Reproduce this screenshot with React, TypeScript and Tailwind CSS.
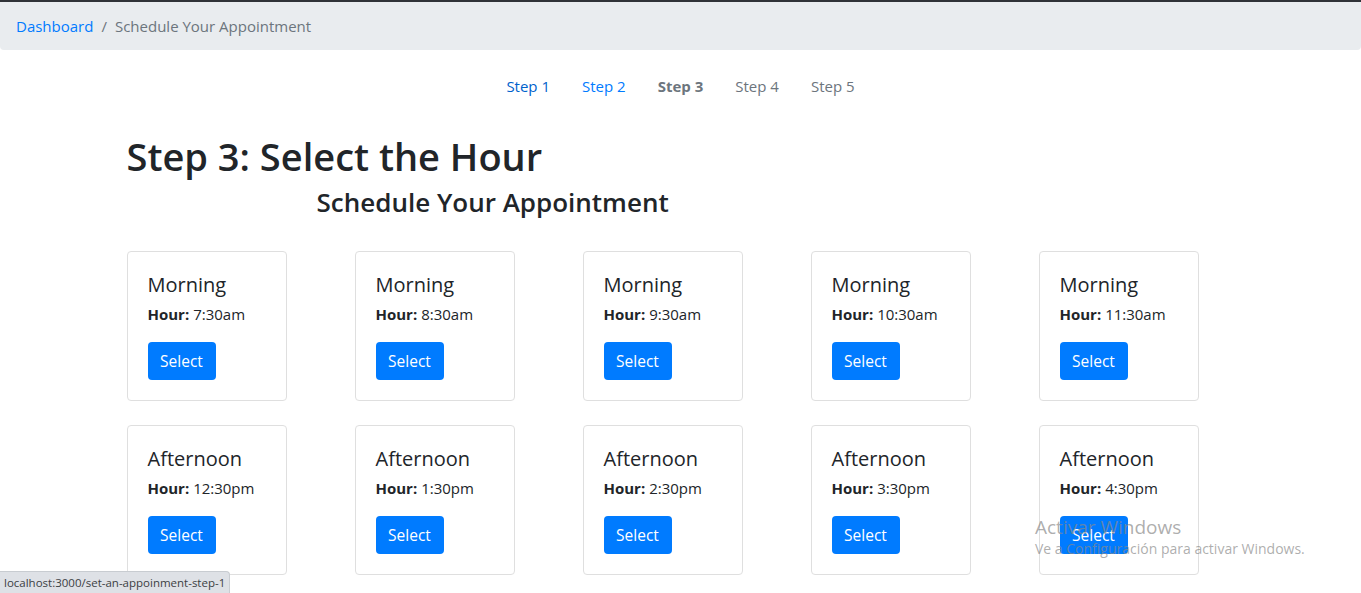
import React from 'react';

const morning = ['7:30am', '8:30am', '9:30am', '10:30am', '11:30am'];
const afternoon = ['12:30pm', '1:30pm', '2:30pm', '3:30pm', '4:30pm'];

const steps = [
  { label: 'Step 1', cls: 'text-[#0062cc]' },
  { label: 'Step 2', cls: 'text-[#007bff]' },
  { label: 'Step 3', cls: 'text-[#6c757d] font-bold' },
  { label: 'Step 4', cls: 'text-[#6c757d]' },
  { label: 'Step 5', cls: 'text-[#6c757d]' },
];

const HourCard = ({ period, hour }: { period: string; hour: string }) => (
  <div className="w-[160px] h-[150px] border border-[#dfdfdf] rounded-[4px] px-5 pt-[21px]">
    <h5 className="text-[20px] leading-[24px] text-[#212529]">{period}</h5>
    <p className="mt-[5px] text-[15px] leading-[24px] text-[#212529]">
      <b className="font-bold">Hour:</b> {hour}
    </p>
    <button className="mt-[16px] w-[68px] h-[38px] rounded-[4px] bg-[#007bff] text-white text-[15.5px] leading-[24px]">
      Select
    </button>
  </div>
);

export default function App() {
  return (
    <div className="relative min-h-[593px] bg-white text-[#212529] font-['Open_Sans',sans-serif] text-[15px] overflow-hidden">
      <div className="h-[2px] bg-[#2f3237]" />
      <nav className="h-[48px] bg-[#e9ecef] rounded-b-[4px] px-4 flex items-center text-[15px] pt-[1px]">
        <a className="text-[#007bff]">Dashboard</a>
        <span className="px-2 text-[#6c757d]">/</span>
        <span className="text-[#6c757d]">Schedule Your Appointment</span>
      </nav>

      <ul className="mt-4 flex justify-center">
        {steps.map((s) => (
          <li key={s.label} className={`px-4 py-2 leading-[24px] ${s.cls}`}>
            {s.label}
          </li>
        ))}
      </ul>

      <div className="w-[1108px] mx-auto">
        <h1 className="mt-[26px] text-[38px] leading-[48px] font-semibold">Step 3: Select the Hour</h1>
        <h3 className="ml-[190px] mt-[5px] text-[26px] leading-[34px] font-semibold">Schedule Your Appointment</h3>

        <div className="mt-[32px] grid grid-cols-[repeat(5,160px)] gap-x-[68px] gap-y-[24px]">
          {morning.map((h) => (
            <HourCard key={h} period="Morning" hour={h} />
          ))}
          {afternoon.map((h) => (
            <HourCard key={h} period="Afternoon" hour={h} />
          ))}
        </div>
      </div>

      {/* browser status bar */}
      <div className="absolute left-0 bottom-0 h-[22px] px-1 bg-[#dee1e6] rounded-tr-[4px] border-t border-r border-[#c8ccd1] text-[11.5px] leading-[21px] text-[#3c4043]">
        localhost:3000/set-an-appoinment-step-1
      </div>

      {/* windows activation watermark */}
      <div className="absolute left-[1035px] top-[515px] text-[#8a8a8a]/70 pointer-events-none">
        <div className="text-[19px] leading-[25px]">Activar Windows</div>
        <div className="text-[14px] leading-[18px]">Ve a Configuración para activar Windows.</div>
      </div>
    </div>
  );
}
